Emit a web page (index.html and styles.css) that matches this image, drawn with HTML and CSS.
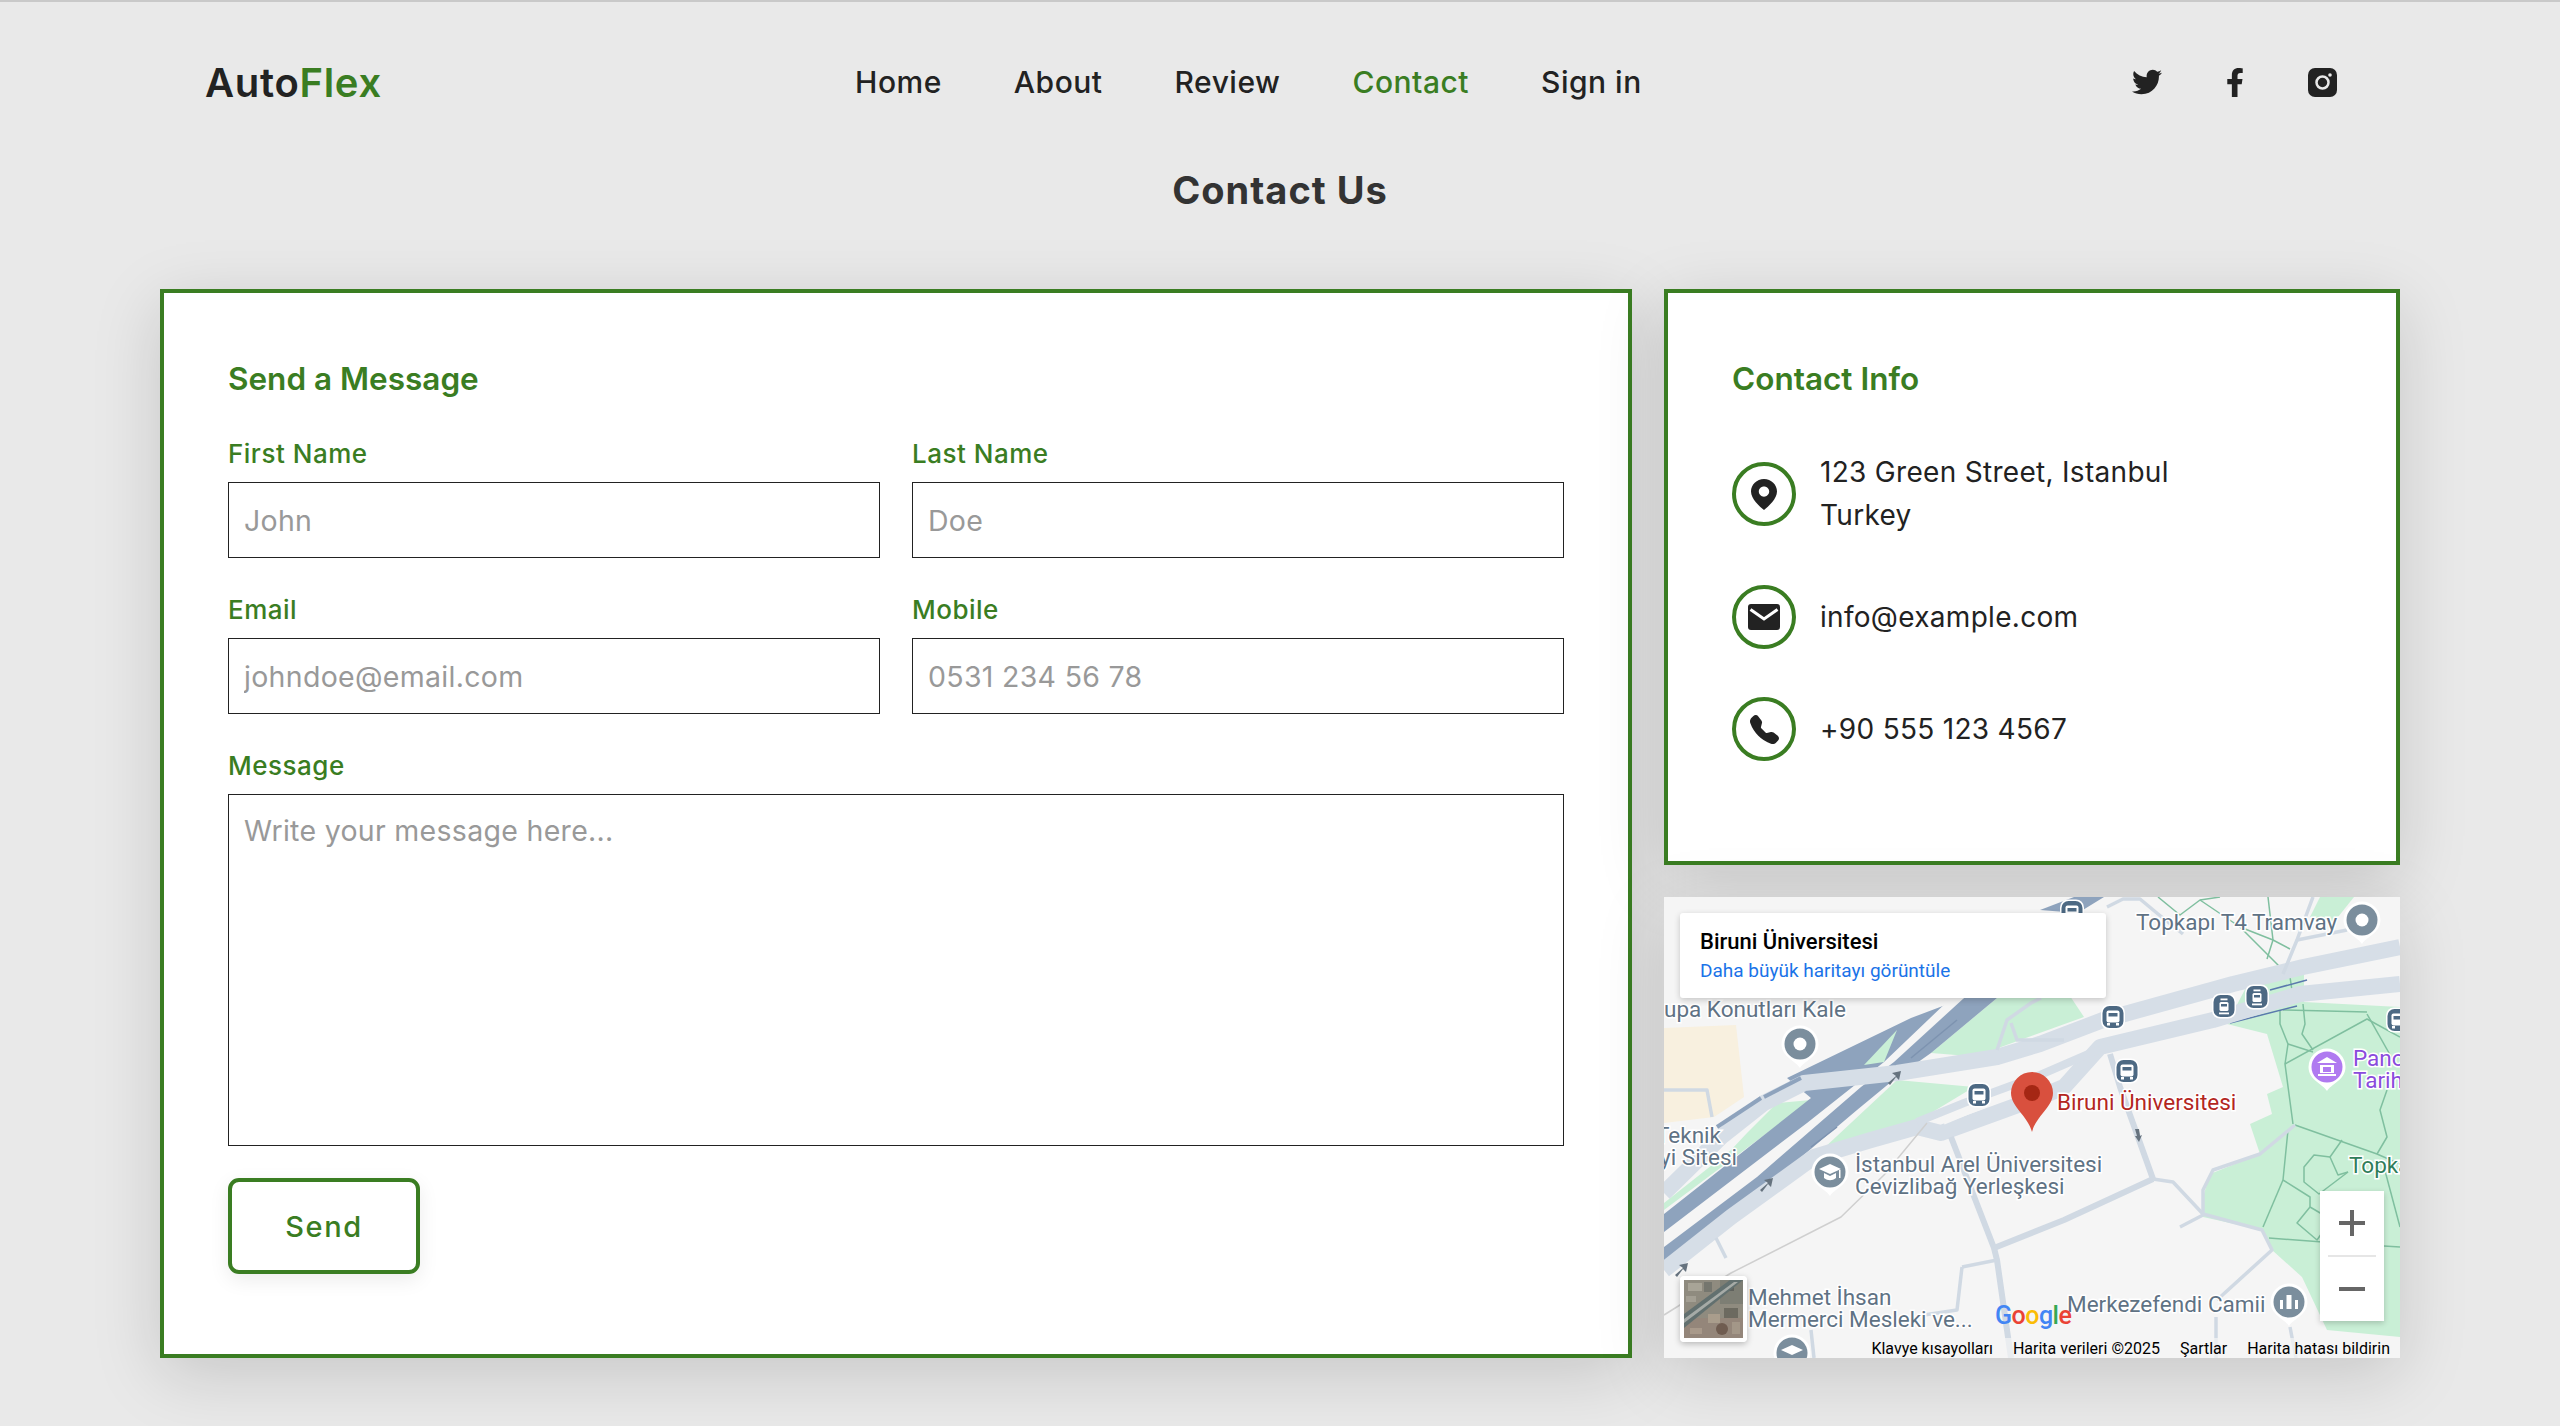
FILE: index.html
```html
<!DOCTYPE html>
<html lang="en">

<head>
  <meta charset="UTF-8" />
  <meta name="viewport" content="width=device-width, initial-scale=1.0" />
  <title>Contact - AutoFlex</title>
  <link rel="stylesheet" href="styles.css">
</head>

<body>
  <div class="header">
    <a href="#" class="logo">Auto<span>Flex</span></a>
    <div class="nav-container">
      <a href="#" class="nav-link">Home</a>
      <a href="#" class="nav-link">About</a>
      <a href="#" class="nav-link">Review</a>
      <a href="#" class="nav-link active">Contact</a>
      <a href="#" class="nav-link">Sign in</a>
    </div>
    <div class="social">
      <a href="#" class="social-link">
        <svg class="icon-twitter" viewBox="0 0 512 512"><path d="M459.37 151.716c.325 4.548.325 9.097.325 13.645 0 138.72-105.583 298.558-298.558 298.558-59.452 0-114.68-17.219-161.137-47.106 8.447.974 16.568 1.299 25.34 1.299 49.055 0 94.213-16.568 130.274-44.832-46.132-.975-84.792-31.188-98.112-72.772 6.498.974 12.995 1.624 19.818 1.624 9.421 0 18.843-1.3 27.614-3.573-48.081-9.747-84.143-51.98-84.143-102.985v-1.299c13.969 7.797 30.214 12.67 47.431 13.319-28.264-18.843-46.781-51.005-46.781-87.391 0-19.492 5.197-37.36 14.294-52.954 51.655 63.675 129.3 105.258 216.365 109.807-1.624-7.797-2.599-15.918-2.599-24.04 0-57.828 46.782-104.934 104.934-104.934 30.213 0 57.502 12.67 76.67 33.137 23.715-4.548 46.456-13.645 66.599-25.665-7.798 24.366-24.366 44.833-46.132 57.827 21.117-2.273 41.584-8.122 60.426-16.243-14.292 20.791-32.161 39.308-52.628 54.253z"/></svg>
      </a>
      <a href="#" class="social-link">
        <svg class="icon-facebook" viewBox="0 0 320 512"><path d="M279.14 288l14.22-92.66h-88.91v-60.13c0-25.35 12.42-50.06 52.24-50.06h40.42V6.26S260.43 0 225.36 0c-73.22 0-121.08 44.38-121.08 124.72v70.62H22.89V288h81.39v224h100.17V288z"/></svg>
      </a>
      <a href="#" class="social-link">
        <svg class="icon-instagram" viewBox="0 0 29 29">
          <rect width="29" height="29" rx="7" />
          <circle class="ig-ring" cx="14.5" cy="14.5" r="6" />
          <circle class="ig-dot" cx="22" cy="7" r="1.8" />
        </svg>
      </a>
    </div>
  </div>

  <h1 class="page-title">Contact Us</h1>

  <div class="container">
    <form class="card form-card">
      <h3>Send a Message</h3>
      <div class="form-grid">
        <div class="form-group">
          <label>First Name</label>
          <input type="text" placeholder="John">
        </div>
        <div class="form-group">
          <label>Last Name</label>
          <input type="text" placeholder="Doe">
        </div>
        <div class="form-group">
          <label>Email</label>
          <input type="text" placeholder="johndoe@email.com">
        </div>
        <div class="form-group">
          <label>Mobile</label>
          <input type="text" placeholder="0531 234 56 78">
        </div>
        <div class="form-group full">
          <label>Message</label>
          <textarea placeholder="Write your message here..."></textarea>
        </div>
      </div>
      <button type="button" class="send-button">Send</button>
    </form>

    <div class="side-column">
      <div class="card info-card">
        <h3>Contact Info</h3>
        <div class="info-item">
          <span class="info-icon">
            <svg class="icon-pin" viewBox="0 0 26 31"><path fill-rule="evenodd" d="M13 0C5.8 0 0 5.6 0 12.6 0 20 8.6 27.6 13 31c4.4-3.4 13-11 13-18.400C26 5.600 20.200 0 13 0zm0 7.500c2.900 0 5.200 2.300 5.200 5.100s-2.300 5.100-5.200 5.100-5.200-2.300-5.200-5.100 2.300-5.100 5.200-5.100z"/></svg>
          </span>
          <p>123 Green Street, Istanbul<br>Turkey</p>
        </div>
        <div class="info-item">
          <span class="info-icon">
            <svg class="icon-mail" viewBox="0 0 32 26"><rect width="32" height="26" rx="3" /><path class="mail-flap" d="M2.500 5.500L16 15 29.500 5.500" /></svg>
          </span>
          <p>info@example.com</p>
        </div>
        <div class="info-item">
          <span class="info-icon">
            <svg class="icon-phone" viewBox="0 0 16 16"><path d="M1.885.511a1.745 1.745 0 0 1 2.61.163L6.29 2.98c.329.423.445.974.315 1.494l-.547 2.19a.678.678 0 0 0 .178.643l2.457 2.457a.678.678 0 0 0 .644.178l2.189-.547a1.745 1.745 0 0 1 1.494.315l2.306 1.794c.829.645.905 1.87.163 2.611l-1.034 1.034c-.74.74-1.846 1.065-2.877.702a18.634 18.634 0 0 1-7.01-4.42 18.634 18.634 0 0 1-4.42-7.009c-.362-1.03-.037-2.137.703-2.877L1.885.511z"/></svg>
          </span>
          <p>+90 555 123 4567</p>
        </div>
      </div>

      <div class="map">
        <svg class="map-canvas" viewBox="0 0 736 461">
          <defs>
            <path id="pin-shape" d="M0 24C-4 17-18.500 13-18.500 0a18.500 18.500 0 0 1 37 0C18.500 13 4 17 0 24z" />
            <g id="bus">
              <rect x="-12" y="-12.500" width="24" height="25" rx="8" class="badge-edge" />
              <rect x="-10.500" y="-11" width="21" height="22" rx="7" class="badge-fill" />
              <rect x="-6.500" y="-6.500" width="13" height="12" rx="2" class="badge-mark" />
              <rect x="-4.500" y="-4" width="9" height="3.500" class="badge-fill" />
              <rect x="-6" y="6" width="3" height="2.500" class="badge-mark" />
              <rect x="3" y="6" width="3" height="2.500" class="badge-mark" />
            </g>
            <g id="tram">
              <rect x="-12" y="-12.500" width="24" height="25" rx="8" class="badge-edge" />
              <rect x="-10.500" y="-11" width="21" height="22" rx="7" class="badge-fill" />
              <rect x="-4.500" y="-4" width="9" height="9" rx="1.500" class="badge-mark" />
              <rect x="-3" y="-2" width="6" height="2.500" class="badge-fill" />
              <rect x="-3.500" y="-7.500" width="7" height="1.800" class="badge-mark" />
              <rect x="-5" y="6.500" width="10" height="1.800" class="badge-mark" />
            </g>
            <path id="arrow" d="M-6 5L2-2-2-5 7-7 5 2 2-1-4 7z" />
          </defs>

          <!-- areas -->
          <rect class="ground" width="736" height="461" />
          <polygon class="sand" points="0,131 72,128 80,200 50,220 0,226" />
          <polyline class="road-thin" points="0,193 43,193 48,220" />
          <polygon class="park" points="267,156 333,101 400,90 420,120 337,150 317,160" />
          <polygon class="park" points="158,253 233,183 310,190 267,216 240,228 187,243" />
          <polygon class="park" points="0,313 147,203 113,206 83,236 67,253 0,306" />
          <polygon class="park" points="563,127 603,137 619,190 603,197 608,217 586,227 596,257 546,277 539,300 539,320 598,333 608,353 638,380 663,433 736,440 736,110 640,105 640,70 590,75" />
          <polygon class="park" points="646,20 656,0 690,0 670,25" />

          <!-- park paths -->
          <g class="trail">
            <polyline points="494,0 516,18 536,3 556,0" />
            <polyline points="536,3 576,30 626,80 630,107" />
            <polyline points="576,30 609,43 626,52" />
            <polyline points="604,0 609,43 603,62" />
            <polyline points="616,113 616,127 624,147 621,167 629,227" />
            <polyline points="639,107 641,127 638,137 649,153" />
            <polyline points="621,167 703,122 736,140" />
            <polyline points="624,147 649,155" />
            <polyline points="619,113 703,115" />
            <polyline points="703,117 729,163" />
            <polyline points="631,228 713,257 736,267" />
            <polyline points="624,233 619,283 646,300 646,310 663,320" />
            <polyline points="619,283 599,330" />
            <polyline points="678,243 666,260 674,278 684,275" />
            <polyline points="666,260 650,258 640,270 640,285 655,297 684,275" />
            <polyline points="723,193 716,213 723,240 713,257" />
            <polyline points="646,310 633,326 653,343 672,316" />
            <polyline points="605,341 672,346 736,350" />
            <polyline points="720,270 736,330" />
          </g>

          <!-- motorway -->
          <polygon class="motorway" points="0,317 147,201 123,181 247,121 300,101 333,101 267,156 233,180 193,213 110,283 0,365" />
          <polygon class="ground" points="0,335 0,350 93,280 197,190 230,165 300,101 287,101 220,165 143,226" />
          <polygon class="park" points="200,168 233,133 220,165" />
          <polygon class="motorway" points="376,13 410,0 440,0 414,16" />
          <polyline class="motorway-edge" points="247,161 293,123" />
          <polyline class="motorway-edge" points="147,250 173,230" />
          <polyline class="rail-line" points="569,83 638,65" />
          <polyline class="rail-line" points="606,93 643,83" />
          <polyline class="rail-line" points="566,126 633,109" />

          <!-- main roads -->
          <g class="road-wide">
            <polyline points="0,296 57,240 100,206 140,186 233,176 333,160 376,147 439,123 569,87 639,70 736,50" />
            <polyline points="0,373 67,320 150,260 207,243 253,230 277,236 376,200 400,190 436,150 549,123 636,97 736,87" />
          </g>
          <polyline class="road-mid" points="253,225 300,206 376,178 436,152" />
          <polyline class="road-gap" points="280,226 304,216 345,200" />
          <polyline class="motorway-line" points="53,230 97,201" />
          <polyline class="motorway-line" points="100,200 137,181" />

          <!-- small roads -->
          <g class="road-small">
            <polyline points="287,240 330,351 333,363 347,461" />
            <polyline points="330,351 400,323 489,282" />
            <polyline points="446,157 456,190 489,282" />
          </g>
          <g class="road-thin">
            <polyline points="298,370 333,363" />
            <polyline points="298,370 293,413 260,418" />
            <polyline points="52,341 62,361" />
            <polyline points="147,433 150,461" />
            <polyline points="333,153 343,123 367,106 377,101" />
            <polyline points="347,126 353,143 400,143" />
            <polyline points="489,282 509,285 539,317 598,333 608,353 553,403" />
            <polyline points="539,318 516,330" />
            <polyline points="631,228 596,257 549,273 539,293 539,317" />
            <polyline points="443,10 459,2 476,2 494,17 519,37" />
            <polyline points="649,0 633,43 619,77" />
            <polyline points="633,43 683,33" />
            <polyline points="552,420 552,461" />
            <polyline points="626,430 632,461" />
          </g>
          <polyline class="railway" points="0,418 67,376 177,320 220,278 263,226" />

          <!-- one-way arrows -->
          <g class="road-arrow">
            <use href="#arrow" x="230" y="181" />
            <use href="#arrow" x="102" y="288" />
            <use href="#arrow" x="17" y="373" />
          </g>
          <path class="road-arrow" d="M471 232h4l1 7 2-1-3 7-4-6 2 0z" />

          <!-- transit stops -->
          <use href="#bus" x="408" y="15" />
          <use href="#bus" x="449" y="120" />
          <use href="#bus" x="463" y="174" />
          <use href="#bus" x="315" y="198" />
          <use href="#bus" x="734" y="123" />
          <use href="#tram" x="560" y="109" />
          <use href="#tram" x="593" y="100" />

          <!-- place pins -->
          <use href="#pin-shape" class="pin-edge" x="698" y="23" />
          <circle cx="698" cy="23" r="15.500" class="pin-grey" />
          <circle cx="698" cy="23" r="6.500" class="pin-hole" />

          <use href="#pin-shape" class="pin-edge" x="136" y="147" />
          <circle cx="136" cy="147" r="15.500" class="pin-grey" />
          <circle cx="136" cy="147" r="6.500" class="pin-hole" />

          <use href="#pin-shape" class="pin-edge" x="166" y="275" />
          <circle cx="166" cy="275" r="15.500" class="pin-grey" />
          <path class="pin-hole" d="M155 272l11-5 11 5-11 5zM160 276v5c4 3 8 3 12 0v-5l-6 3zM175 273h1.500v8H175z" />

          <use href="#pin-shape" class="pin-edge" x="625" y="405" />
          <circle cx="625" cy="405" r="15.500" class="pin-grey" />
          <path class="pin-hole" d="M616 403h3v9h-3zM622.500 398h5v14h-5zM631 403h3v9h-3z" />

          <use href="#pin-shape" class="pin-edge" x="663" y="170" />
          <circle cx="663" cy="170" r="15.500" class="pin-purple" />
          <path class="pin-hole" d="M653 166l10-6 10 6zM654 177h18v2h-18zM656 168h14v8h-14z" />
          <path class="pin-purple" d="M659 170h8v5h-8z" />

          <use href="#pin-shape" class="pin-edge" x="128" y="456" />
          <circle cx="128" cy="456" r="15.500" class="pin-grey" />
          <path class="pin-hole" d="M117 453l11-5 11 5-11 5z" />

          <!-- marker -->
          <path class="marker" d="M368 235C364 219 347 210 347 196a21 21 0 0 1 42 0C389 210 372 219 368 235z" />
          <circle class="marker-dot" cx="368" cy="196" r="8" />

          <!-- labels -->
          <g class="map-labels">
            <text x="472" y="33">Topkapı T4 Tramvay</text>
            <text x="0" y="120">upa Konutları Kale</text>
            <text x="57" y="246" text-anchor="end">Teknik</text>
            <text x="73" y="268" text-anchor="end">yi Sitesi</text>
            <text x="191" y="275">İstanbul Arel Üniversitesi</text>
            <text x="191" y="297">Cevizlibağ Yerleşkesi</text>
            <text x="84" y="408">Mehmet İhsan</text>
            <text x="84" y="430">Mermerci Mesleki ve...</text>
            <text x="403" y="415">Merkezefendi Camii</text>
            <text class="label-red" x="393" y="213">Biruni Üniversitesi</text>
            <text class="label-purple" x="689" y="169">Panorama</text>
            <text class="label-purple" x="689" y="191">Tarih</text>
            <text class="label-green" x="685" y="276">Topkapı</text>
          </g>
          <text class="google" x="331" y="427"><tspan class="g-blue">G</tspan><tspan class="g-red">o</tspan><tspan class="g-yellow">o</tspan><tspan class="g-blue">g</tspan><tspan class="g-green">l</tspan><tspan class="g-red">e</tspan></text>
        </svg>

        <div class="map-place">
          <div class="map-place-name">Biruni Üniversitesi</div>
          <a href="#" class="map-place-link">Daha büyük haritayı görüntüle</a>
        </div>

        <div class="map-thumb">
          <svg viewBox="0 0 59 58">
            <rect width="59" height="58" fill="#8f8b7f" />
            <rect y="38" width="59" height="20" fill="#94867a" />
            <rect x="36" width="23" height="24" fill="#7d7e74" />
            <rect x="4" y="3" width="14" height="8" fill="#a8a497" />
            <rect x="20" y="2" width="8" height="10" fill="#75766e" />
            <rect x="42" y="4" width="8" height="7" fill="#5f625d" />
            <rect x="2" y="16" width="10" height="6" fill="#a39f93" />
            <polygon points="0,34 46,0 59,0 0,48" fill="#62706f" />
            <polygon points="0,39 50,2 54,2 0,43" fill="#a6aba7" />
            <rect x="24" y="34" width="12" height="9" fill="#a99d8c" />
            <rect x="40" y="28" width="14" height="10" fill="#6c6a60" />
            <rect x="6" y="48" width="12" height="6" fill="#a8998a" />
            <circle cx="38" cy="49" r="6" fill="#6f5c50" />
            <rect x="48" y="42" width="8" height="12" fill="#a39788" />
          </svg>
        </div>

        <div class="map-zoom">
          <div class="zoom-btn"><svg viewBox="0 0 26 26"><path d="M0 13h26M13 0v26" /></svg></div>
          <div class="zoom-line"></div>
          <div class="zoom-btn"><svg viewBox="0 0 26 26"><path d="M0 13h26" /></svg></div>
        </div>

        <div class="map-footer">
          <span>Klavye kısayolları</span>
          <span>Harita verileri ©2025</span>
          <span>Şartlar</span>
          <span>Harita hatası bildirin</span>
        </div>
      </div>
    </div>
  </div>
</body>

</html>
```

FILE: styles.css
```css
body {
  font-family: 'Inter', 'Noto Sans', sans-serif;
  margin: 0;
  padding: 0 0 68px;
  background-color: #e9e9e9;
  border-top: 2px solid #c9c9c9;
  color: #222;
}

a {
  text-decoration: none;
  color: inherit;
}

/* 顶部导航 */
.header {
  height: 160px;
  padding: 0 205px;
  display: flex;
  align-items: center;
  justify-content: space-between;
}

.logo {
  font-size: 40px;
  font-weight: 600;
  letter-spacing: 0.7px;
}

.logo span {
  color: #3a7d22;
}

.nav-container {
  display: flex;
  gap: 72px;
}

.nav-link {
  font-size: 30px;
  font-weight: 500;
  letter-spacing: 0.5px;
}

.nav-link.active {
  color: #3a7d22;
}

.social {
  display: flex;
  gap: 24px;
}

.social-link {
  width: 64px;
  height: 32px;
  display: flex;
  align-items: center;
  justify-content: center;
}

.social-link svg {
  fill: #222;
  display: block;
}

.icon-twitter {
  width: 30px;
  height: 30px;
}

.icon-facebook {
  width: 18px;
  height: 29px;
}

.icon-instagram {
  width: 29px;
  height: 29px;
}

.ig-ring {
  fill: none;
  stroke: #e9e9e9;
  stroke-width: 2.5;
}

.ig-dot {
  fill: #e9e9e9;
}

.page-title {
  margin: 0;
  height: 127px;
  padding-top: 3px;
  box-sizing: border-box;
  text-align: center;
  font-size: 38px;
  line-height: 50px;
  font-weight: 700;
  letter-spacing: 1px;
  color: #333;
}

/* 主体布局 */
.container {
  margin: 0 160px;
  display: grid;
  grid-template-columns: 2fr 1fr;
  gap: 32px;
}

.card {
  background: white;
  border: 4px solid #3a7d22;
  padding: 64px;
  box-shadow: 0 16px 64px rgba(0,0,0,0.15);
}

.card h3 {
  margin: -2px 0 0;
  font-size: 31.5px;
  line-height: 48px;
  font-weight: 600;
  color: #3a7d22;
}

.form-grid {
  display: grid;
  grid-template-columns: 1fr 1fr;
  gap: 32px;
  margin-top: 31px;
}

.form-group.full {
  grid-column: 1 / -1;
}

.form-group label {
  display: block;
  font-size: 26px;
  line-height: 40px;
  font-weight: 500;
  letter-spacing: 0.5px;
  color: #3a7d22;
  margin-bottom: 8px;
}

.form-group input,
.form-group textarea {
  display: block;
  width: 100%;
  box-sizing: border-box;
  border: 1px solid #222;
  background: white;
  padding: 16px 15px;
  font-family: inherit;
  font-size: 28.5px;
  letter-spacing: 0.3px;
  line-height: 40px;
  color: #222;
  outline: none;
  resize: none;
}

.form-group input {
  height: 76px;
}

.form-group textarea {
  height: 352px;
}

.form-group input::placeholder,
.form-group textarea::placeholder {
  color: #999;
}

.send-button {
  display: block;
  width: 192px;
  height: 96px;
  margin: 32px 0 16px;
  background: white;
  border: 4px solid #3a7d22;
  border-radius: 11px;
  color: #3a7d22;
  font-family: inherit;
  font-size: 29px;
  font-weight: 500;
  letter-spacing: 1.6px;
  box-shadow: 0 6px 20px rgba(0,0,0,0.08);
}

/* 右侧栏 */
.side-column {
  display: flex;
  flex-direction: column;
  gap: 32px;
}

.info-card {
  flex: 1;
}

.info-card h3 {
  margin-bottom: 48px;
}

.info-item {
  display: flex;
  align-items: center;
  gap: 24px;
  margin-bottom: 48px;
}

.info-item:last-child {
  margin-bottom: 0;
}

.info-item p {
  margin: 0;
  font-size: 28px;
  line-height: 43px;
  letter-spacing: 0.3px;
}

.info-icon {
  flex: none;
  box-sizing: border-box;
  width: 64px;
  height: 64px;
  border: 4px solid #3a7d22;
  border-radius: 50%;
  display: flex;
  align-items: center;
  justify-content: center;
}

.info-icon svg {
  fill: #222;
  display: block;
}

.icon-pin {
  width: 26px;
  height: 31px;
}

.icon-mail {
  width: 32px;
  height: 26px;
}

.mail-flap {
  fill: none;
  stroke: white;
  stroke-width: 3;
}

.icon-phone {
  width: 29px;
  height: 29px;
}

/* 地图 */
.map {
  position: relative;
  height: 461px;
  overflow: hidden;
  font-family: 'Roboto', 'Liberation Sans', sans-serif;
  box-shadow: 0 16px 64px rgba(0,0,0,0.15);
}

.map-canvas {
  display: block;
  width: 100%;
  height: 100%;
}

.ground { fill: #f5f5f5; }
.sand { fill: #f8f0df; }
.park { fill: #c9efd6; }
.motorway { fill: #8ea3bd; }

.trail polyline,
.road-wide polyline,
.road-small polyline,
.road-thin,
.road-thin polyline,
.road-mid,
.road-gap,
.rail-line,
.motorway-edge,
.motorway-line,
.railway {
  fill: none;
  stroke-linejoin: round;
}

.trail polyline {
  stroke: #7fbf9f;
  stroke-width: 1.500;
}

.rail-line {
  stroke: #5a78ad;
  stroke-width: 1.500;
}

.motorway-edge {
  stroke: #7d93b0;
  stroke-width: 1.500;
}

.motorway-line {
  stroke: #8ea3bd;
  stroke-width: 4;
}

.road-wide polyline {
  stroke: #d6dee7;
  stroke-width: 16;
}

.road-mid {
  stroke: #d6dee7;
  stroke-width: 8;
}

.road-gap {
  stroke: #f5f5f5;
  stroke-width: 3;
}

.road-small polyline {
  stroke: #d0d9e3;
  stroke-width: 6;
}

.road-thin,
.road-thin polyline {
  stroke: #d0d9e3;
  stroke-width: 3.500;
}

.railway {
  stroke: #cfcfcf;
  stroke-width: 1.500;
}

.road-arrow { fill: #66737f; }

.badge-edge { fill: white; }
.badge-fill { fill: #4d6983; }
.badge-mark { fill: white; }

.pin-edge { fill: white; }
.pin-grey { fill: #7b8e9d; }
.pin-purple { fill: #b07af0; }
.pin-hole { fill: white; }

.marker { fill: #d9503e; }
.marker-dot { fill: #a52714; }

.map-labels text {
  font-size: 22.500px;
  fill: #5f7284;
  stroke: white;
  stroke-width: 3px;
  paint-order: stroke;
}

.map-labels .label-red { fill: #b3261e; }
.map-labels .label-purple { fill: #8a4bdc; }
.map-labels .label-green { fill: #2f7d5a; }

.google {
  font-size: 25px;
  font-weight: 500;
  letter-spacing: -0.500px;
}

.g-blue { fill: #4285f4; }
.g-red { fill: #ea4335; }
.g-yellow { fill: #fbbc05; }
.g-green { fill: #34a853; }

.map-place {
  position: absolute;
  left: 16px;
  top: 16px;
  width: 426px;
  height: 85px;
  box-sizing: border-box;
  padding: 16px 20px;
  background: white;
  border-radius: 3px;
  box-shadow: 0 2px 6px rgba(0,0,0,0.2);
}

.map-place-name {
  font-size: 22px;
  line-height: 26px;
  font-weight: 500;
  color: #000;
}

.map-place-link {
  display: block;
  margin-top: 3px;
  font-size: 19px;
  line-height: 26px;
  color: #1a73e8;
}

.map-thumb {
  position: absolute;
  left: 16px;
  top: 379px;
  width: 67px;
  height: 66px;
  box-sizing: border-box;
  border: 4px solid white;
  border-radius: 4px;
  box-shadow: 0 2px 6px rgba(0,0,0,0.25);
  overflow: hidden;
}

.map-thumb svg {
  display: block;
  width: 100%;
  height: 100%;
}

.map-zoom {
  position: absolute;
  left: 656px;
  top: 294px;
  width: 64px;
  height: 130px;
  background: white;
  box-shadow: 0 2px 6px rgba(0,0,0,0.2);
}

.zoom-btn {
  height: 64px;
  display: flex;
  align-items: center;
  justify-content: center;
}

.zoom-btn svg {
  width: 26px;
  height: 26px;
  stroke: #666;
  stroke-width: 4;
}

.zoom-line {
  height: 2px;
  margin: 0 8px;
  background: #e6e6e6;
}

.map-footer {
  position: absolute;
  right: 0;
  bottom: 0;
  height: 20px;
  padding: 0 10px 0 12px;
  display: flex;
  gap: 20px;
  background: rgba(245,245,245,0.7);
  font-size: 16px;
  line-height: 22px;
  color: #000;
}
```
